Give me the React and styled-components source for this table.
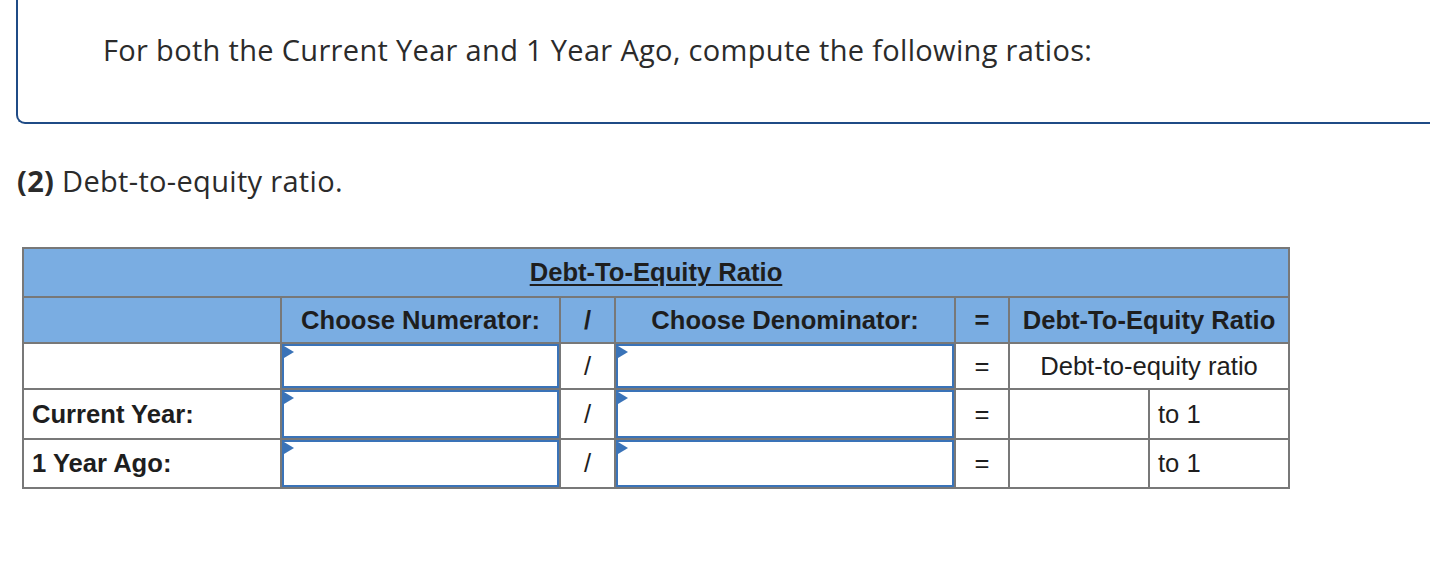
import React from "react";
import styled, { createGlobalStyle } from "styled-components";

const GlobalStyle = createGlobalStyle`
  body {
    margin: 0;
    background: #fff;
    font-family: "Open Sans", Lato, sans-serif;
    color: #2b2b2b;
  }
`;

const Page = styled.div`
  width: 1430px;
  height: 580px;
  overflow: hidden;
`;

const Prompt = styled.div`
  margin-left: 16px;
  height: 124px;
  border-left: 2px solid #1f4b86;
  border-bottom: 2px solid #1f4b86;
  border-bottom-left-radius: 9px;
  padding-left: 85px;
  padding-top: 33px;
  box-sizing: border-box;
  font-size: 29px;
  line-height: 34px;
  letter-spacing: 0.32px;
`;

const Question = styled.div`
  margin: 40px 0 0 17px;
  font-size: 29px;
  line-height: 34px;
  letter-spacing: 0.32px;

  b {
    font-weight: 700;
  }
`;

const Table = styled.table`
  margin: 49px 0 0 22px;
  border-collapse: collapse;
  font-family: "Liberation Sans", Arial, sans-serif;
  font-size: 25.6px;
  color: #1e1e1e;
  table-layout: fixed;
`;

const Row = styled.tr`
  height: ${(p) => p.$h}px;
`;

const Cell = styled.td`
  border: 2px solid #787878;
  padding: ${(p) => (p.$left ? "0 8px" : "0")};
  text-align: ${(p) => (p.$left ? "left" : "center")};
  background: ${(p) => (p.$head ? "#7aade2" : "#fff")};
  font-weight: ${(p) => (p.$bold ? 700 : 400)};
  vertical-align: middle;
  white-space: nowrap;
`;

const Title = styled.span`
  text-decoration: underline;
  text-underline-offset: 3px;
  text-decoration-thickness: 2px;
`;

const Picker = styled.div`
  position: relative;
  height: ${(p) => p.$h}px;
  border: 2px solid #3a73b8;
  box-sizing: border-box;
  background: #fff;
`;

const Flag = styled.span`
  position: absolute;
  left: 0;
  top: 0;
  width: 0;
  height: 0;
  border-top: 6px solid transparent;
  border-bottom: 6px solid transparent;
  border-left: 10px solid #3a73b8;
`;

const widths = [256, 277, 53, 338, 52, 138, 138];

const Inputs = ({ h }) => (
  <>
    <Cell>
      <Picker $h={h}>
        <Flag />
      </Picker>
    </Cell>
    <Cell>/</Cell>
    <Cell>
      <Picker $h={h}>
        <Flag />
      </Picker>
    </Cell>
    <Cell>=</Cell>
  </>
);

export default function App() {
  return (
    <Page>
      <GlobalStyle />
      <Prompt>
        For both the Current Year and 1 Year Ago, compute the following ratios:
      </Prompt>
      <Question>
        <b>(2)</b> Debt-to-equity ratio.
      </Question>
      <Table>
        <colgroup>
          {widths.map((w, i) => (
            <col key={i} style={{ width: w + 2 }} />
          ))}
        </colgroup>
        <tbody>
          <Row $h={49}>
            <Cell $head $bold colSpan={7}>
              <Title>Debt-To-Equity Ratio</Title>
            </Cell>
          </Row>
          <Row $h={46}>
            <Cell $head />
            <Cell $head $bold>Choose Numerator:</Cell>
            <Cell $head $bold>/</Cell>
            <Cell $head $bold>Choose Denominator:</Cell>
            <Cell $head $bold>=</Cell>
            <Cell $head $bold colSpan={2}>
              Debt-To-Equity Ratio
            </Cell>
          </Row>
          <Row $h={46}>
            <Cell />
            <Inputs h={44} />
            <Cell colSpan={2}>Debt-to-equity ratio</Cell>
          </Row>
          <Row $h={50}>
            <Cell $left $bold>Current Year:</Cell>
            <Inputs h={48} />
            <Cell />
            <Cell $left>to 1</Cell>
          </Row>
          <Row $h={49}>
            <Cell $left $bold>1 Year Ago:</Cell>
            <Inputs h={47} />
            <Cell />
            <Cell $left>to 1</Cell>
          </Row>
        </tbody>
      </Table>
    </Page>
  );
}
